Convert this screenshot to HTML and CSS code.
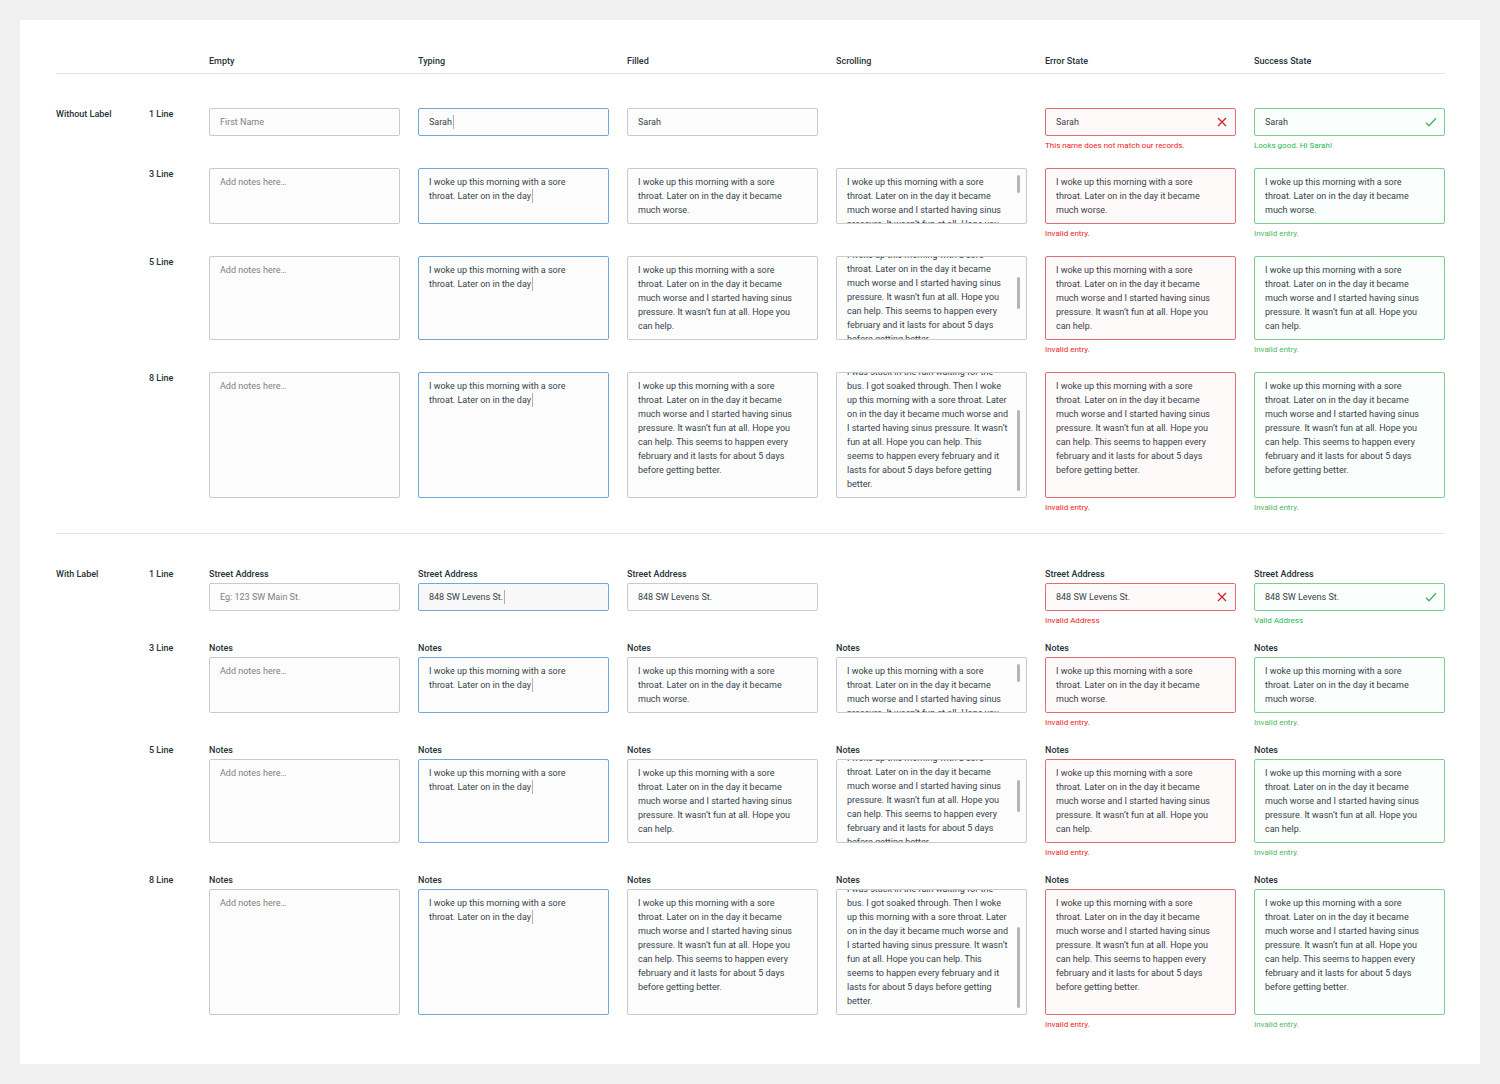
FILE: index.html
```html
<!DOCTYPE html>
<html lang="en">
<head>
<meta charset="utf-8">
<title>Text fields</title>
<link rel="stylesheet" href="styles.css">
</head>
<body>
<main class="sheet">
  <header class="row head">
    <span class="col-empty">Empty</span>
    <span>Typing</span>
    <span>Filled</span>
    <span>Scrolling</span>
    <span>Error State</span>
    <span>Success State</span>
  </header>

  <section class="group">
    <div class="row">
      <h2 class="title">Without Label</h2>
      <h3 class="title">1 Line</h3>
      <div class="field"><input class="box" type="text" placeholder="First Name" aria-label="First name"></div>
      <div class="field"><div class="wrap"><input class="box typing" type="text" value="Sarah" aria-label="First name"><i class="caret caret-name"></i></div></div>
      <div class="field"><input class="box" type="text" value="Sarah" aria-label="First name"></div>
      <div></div>
      <div class="field">
        <div class="wrap"><input class="box error" type="text" value="Sarah" aria-label="First name"><svg class="icon icon-error" viewBox="0 0 12 12"><path d="M2 2l8 8M10 2l-8 8"/></svg></div>
        <p class="help help-error">This name does not match our records.</p>
      </div>
      <div class="field">
        <div class="wrap"><input class="box success" type="text" value="Sarah" aria-label="First name"><svg class="icon icon-success" viewBox="0 0 12 12"><path d="M1 6.7l3 3L11 2.3"/></svg></div>
        <p class="help help-valid">Looks good. Hi Sarah!</p>
      </div>
    </div>

    <div class="row">
      <h3 class="title col-lines">3 Line</h3>
      <div class="field"><textarea class="box" rows="3" placeholder="Add notes here…" aria-label="Notes"></textarea></div>
      <div class="field"><div class="wrap"><textarea class="box typing" rows="3" aria-label="Notes">I woke up this morning with a sore
throat. Later on in the day</textarea><i class="caret caret-notes"></i></div></div>
      <div class="field"><textarea class="box" rows="3" aria-label="Notes">I woke up this morning with a sore
throat. Later on in the day it became
much worse.</textarea></div>
      <div class="field"><div class="wrap"><textarea class="box" rows="3" aria-label="Notes">I woke up this morning with a sore
throat. Later on in the day it became
much worse and I started having sinus
pressure. It wasn’t fun at all. Hope you
can help.</textarea><i class="thumb thumb-start"></i></div></div>
      <div class="field"><textarea class="box error" rows="3" aria-label="Notes">I woke up this morning with a sore
throat. Later on in the day it became
much worse.</textarea><p class="help help-error">Invalid entry.</p></div>
      <div class="field"><textarea class="box success" rows="3" aria-label="Notes">I woke up this morning with a sore
throat. Later on in the day it became
much worse.</textarea><p class="help help-success">Invalid entry.</p></div>
    </div>

    <div class="row">
      <h3 class="title col-lines">5 Line</h3>
      <div class="field"><textarea class="box" rows="5" placeholder="Add notes here…" aria-label="Notes"></textarea></div>
      <div class="field"><div class="wrap"><textarea class="box typing" rows="5" aria-label="Notes">I woke up this morning with a sore
throat. Later on in the day</textarea><i class="caret caret-notes"></i></div></div>
      <div class="field"><textarea class="box" rows="5" aria-label="Notes">I woke up this morning with a sore
throat. Later on in the day it became
much worse and I started having sinus
pressure. It wasn’t fun at all. Hope you
can help.</textarea></div>
      <div class="field"><div class="wrap"><textarea class="box" rows="5" data-scroll="15" aria-label="Notes">I woke up this morning with a sore
throat. Later on in the day it became
much worse and I started having sinus
pressure. It wasn’t fun at all. Hope you
can help. This seems to happen every
february and it lasts for about 5 days
before getting better.</textarea><i class="thumb thumb-middle"></i></div></div>
      <div class="field"><textarea class="box error" rows="5" aria-label="Notes">I woke up this morning with a sore
throat. Later on in the day it became
much worse and I started having sinus
pressure. It wasn’t fun at all. Hope you
can help.</textarea><p class="help help-error">Invalid entry.</p></div>
      <div class="field"><textarea class="box success" rows="5" aria-label="Notes">I woke up this morning with a sore
throat. Later on in the day it became
much worse and I started having sinus
pressure. It wasn’t fun at all. Hope you
can help.</textarea><p class="help help-success">Invalid entry.</p></div>
    </div>

    <div class="row">
      <h3 class="title col-lines">8 Line</h3>
      <div class="field"><textarea class="box" rows="8" placeholder="Add notes here…" aria-label="Notes"></textarea></div>
      <div class="field"><div class="wrap"><textarea class="box typing" rows="8" aria-label="Notes">I woke up this morning with a sore
throat. Later on in the day</textarea><i class="caret caret-notes"></i></div></div>
      <div class="field"><textarea class="box" rows="8" aria-label="Notes">I woke up this morning with a sore
throat. Later on in the day it became
much worse and I started having sinus
pressure. It wasn’t fun at all. Hope you
can help. This seems to happen every
february and it lasts for about 5 days
before getting better.</textarea></div>
      <div class="field"><div class="wrap"><textarea class="box" rows="8" data-scroll="14" aria-label="Notes">I was stuck in the rain waiting for the
bus. I got soaked through. Then I woke
up this morning with a sore throat. Later
on in the day it became much worse and
I started having sinus pressure. It wasn’t
fun at all. Hope you can help. This
seems to happen every february and it
lasts for about 5 days before getting
better.</textarea><i class="thumb thumb-end"></i></div></div>
      <div class="field"><textarea class="box error" rows="8" aria-label="Notes">I woke up this morning with a sore
throat. Later on in the day it became
much worse and I started having sinus
pressure. It wasn’t fun at all. Hope you
can help. This seems to happen every
february and it lasts for about 5 days
before getting better.</textarea><p class="help help-error">Invalid entry.</p></div>
      <div class="field"><textarea class="box success" rows="8" aria-label="Notes">I woke up this morning with a sore
throat. Later on in the day it became
much worse and I started having sinus
pressure. It wasn’t fun at all. Hope you
can help. This seems to happen every
february and it lasts for about 5 days
before getting better.</textarea><p class="help help-success">Invalid entry.</p></div>
    </div>
  </section>

  <section class="group labelled">
    <div class="row">
      <h2 class="title">With Label</h2>
      <h3 class="title">1 Line</h3>
      <div class="field"><label class="label" for="a1">Street Address</label><input id="a1" class="box" type="text" placeholder="Eg: 123 SW Main St."></div>
      <div class="field"><label class="label" for="a2">Street Address</label><div class="wrap"><input id="a2" class="box typing shaded" type="text" value="848 SW Levens St."><i class="caret caret-address"></i></div></div>
      <div class="field"><label class="label" for="a3">Street Address</label><input id="a3" class="box" type="text" value="848 SW Levens St."></div>
      <div></div>
      <div class="field">
        <label class="label" for="a5">Street Address</label>
        <div class="wrap"><input id="a5" class="box error" type="text" value="848 SW Levens St."><svg class="icon icon-error" viewBox="0 0 12 12"><path d="M2 2l8 8M10 2l-8 8"/></svg></div>
        <p class="help help-error">Invalid Address</p>
      </div>
      <div class="field">
        <label class="label" for="a6">Street Address</label>
        <div class="wrap"><input id="a6" class="box success" type="text" value="848 SW Levens St."><svg class="icon icon-success" viewBox="0 0 12 12"><path d="M1 6.7l3 3L11 2.3"/></svg></div>
        <p class="help help-valid">Valid Address</p>
      </div>
    </div>

    <div class="row">
      <h3 class="title col-lines">3 Line</h3>
      <div class="field"><label class="label" for="b1">Notes</label><textarea id="b1" class="box" rows="3" placeholder="Add notes here…"></textarea></div>
      <div class="field"><label class="label" for="b2">Notes</label><div class="wrap"><textarea id="b2" class="box typing" rows="3">I woke up this morning with a sore
throat. Later on in the day</textarea><i class="caret caret-notes"></i></div></div>
      <div class="field"><label class="label" for="b3">Notes</label><textarea id="b3" class="box" rows="3">I woke up this morning with a sore
throat. Later on in the day it became
much worse.</textarea></div>
      <div class="field"><label class="label" for="b4">Notes</label><div class="wrap"><textarea id="b4" class="box" rows="3">I woke up this morning with a sore
throat. Later on in the day it became
much worse and I started having sinus
pressure. It wasn’t fun at all. Hope you
can help.</textarea><i class="thumb thumb-start"></i></div></div>
      <div class="field"><label class="label" for="b5">Notes</label><textarea id="b5" class="box error" rows="3">I woke up this morning with a sore
throat. Later on in the day it became
much worse.</textarea><p class="help help-error">Invalid entry.</p></div>
      <div class="field"><label class="label" for="b6">Notes</label><textarea id="b6" class="box success" rows="3">I woke up this morning with a sore
throat. Later on in the day it became
much worse.</textarea><p class="help help-success">Invalid entry.</p></div>
    </div>

    <div class="row">
      <h3 class="title col-lines">5 Line</h3>
      <div class="field"><label class="label" for="c1">Notes</label><textarea id="c1" class="box" rows="5" placeholder="Add notes here…"></textarea></div>
      <div class="field"><label class="label" for="c2">Notes</label><div class="wrap"><textarea id="c2" class="box typing" rows="5">I woke up this morning with a sore
throat. Later on in the day</textarea><i class="caret caret-notes"></i></div></div>
      <div class="field"><label class="label" for="c3">Notes</label><textarea id="c3" class="box" rows="5">I woke up this morning with a sore
throat. Later on in the day it became
much worse and I started having sinus
pressure. It wasn’t fun at all. Hope you
can help.</textarea></div>
      <div class="field"><label class="label" for="c4">Notes</label><div class="wrap"><textarea id="c4" class="box" rows="5" data-scroll="15">I woke up this morning with a sore
throat. Later on in the day it became
much worse and I started having sinus
pressure. It wasn’t fun at all. Hope you
can help. This seems to happen every
february and it lasts for about 5 days
before getting better.</textarea><i class="thumb thumb-middle"></i></div></div>
      <div class="field"><label class="label" for="c5">Notes</label><textarea id="c5" class="box error" rows="5">I woke up this morning with a sore
throat. Later on in the day it became
much worse and I started having sinus
pressure. It wasn’t fun at all. Hope you
can help.</textarea><p class="help help-error">Invalid entry.</p></div>
      <div class="field"><label class="label" for="c6">Notes</label><textarea id="c6" class="box success" rows="5">I woke up this morning with a sore
throat. Later on in the day it became
much worse and I started having sinus
pressure. It wasn’t fun at all. Hope you
can help.</textarea><p class="help help-success">Invalid entry.</p></div>
    </div>

    <div class="row">
      <h3 class="title col-lines">8 Line</h3>
      <div class="field"><label class="label" for="d1">Notes</label><textarea id="d1" class="box" rows="8" placeholder="Add notes here…"></textarea></div>
      <div class="field"><label class="label" for="d2">Notes</label><div class="wrap"><textarea id="d2" class="box typing" rows="8">I woke up this morning with a sore
throat. Later on in the day</textarea><i class="caret caret-notes"></i></div></div>
      <div class="field"><label class="label" for="d3">Notes</label><textarea id="d3" class="box" rows="8">I woke up this morning with a sore
throat. Later on in the day it became
much worse and I started having sinus
pressure. It wasn’t fun at all. Hope you
can help. This seems to happen every
february and it lasts for about 5 days
before getting better.</textarea></div>
      <div class="field"><label class="label" for="d4">Notes</label><div class="wrap"><textarea id="d4" class="box" rows="8" data-scroll="14">I was stuck in the rain waiting for the
bus. I got soaked through. Then I woke
up this morning with a sore throat. Later
on in the day it became much worse and
I started having sinus pressure. It wasn’t
fun at all. Hope you can help. This
seems to happen every february and it
lasts for about 5 days before getting
better.</textarea><i class="thumb thumb-end"></i></div></div>
      <div class="field"><label class="label" for="d5">Notes</label><textarea id="d5" class="box error" rows="8">I woke up this morning with a sore
throat. Later on in the day it became
much worse and I started having sinus
pressure. It wasn’t fun at all. Hope you
can help. This seems to happen every
february and it lasts for about 5 days
before getting better.</textarea><p class="help help-error">Invalid entry.</p></div>
      <div class="field"><label class="label" for="d6">Notes</label><textarea id="d6" class="box success" rows="8">I woke up this morning with a sore
throat. Later on in the day it became
much worse and I started having sinus
pressure. It wasn’t fun at all. Hope you
can help. This seems to happen every
february and it lasts for about 5 days
before getting better.</textarea><p class="help help-success">Invalid entry.</p></div>
    </div>
  </section>
</main>
<script src="scroll.js"></script>
</body>
</html>
```
FILE: styles.css
```css
* {
  box-sizing: border-box;
}

body {
  margin: 0;
  padding: 20px;
  background: #f0f0f0;
  color: #263238;
  font-family: Roboto, "Liberation Sans", sans-serif;
  font-size: 9px;
  line-height: 12px;
}

.sheet {
  padding: 35px 35px 33px 36px;
  background: #fff;
}

.row {
  display: grid;
  grid-template-columns: 75px 42px repeat(6, minmax(0, 1fr));
  column-gap: 18px;
  align-items: start;
}

.head {
  padding-bottom: 6px;
  border-bottom: 1px solid #e4e4e4;
  font-weight: 500;
}

.col-empty {
  grid-column: 3;
}

.col-lines {
  grid-column: 2;
}

.title {
  margin: 0;
  font-size: 9px;
  font-weight: 500;
  line-height: 12px;
  white-space: nowrap;
}

.group {
  display: flex;
  flex-direction: column;
  gap: 16px;
  padding: 34px 0 19px;
}

.labelled {
  gap: 15px;
  padding-bottom: 0;
  border-top: 1px solid #e4e4e4;
}

.label {
  display: block;
  margin-bottom: 3px;
  font-weight: 500;
}

.wrap {
  position: relative;
}

.box {
  display: block;
  width: 100%;
  margin: 0;
  padding: 6px 10px;
  border: 1px solid #cacaca;
  border-radius: 2px;
  outline: 0;
  background: #fcfcfc;
  color: #37434a;
  font: inherit;
  line-height: 14px;
  resize: none;
  overflow: hidden;
}

.box::placeholder {
  color: #808080;
  opacity: 1;
}

.typing {
  border-color: #6fa8dc;
}

.shaded {
  background: #f8f8f8;
}

.error {
  border-color: #e06c75;
  background: #fffafa;
}

.success {
  border-color: #7fcb92;
  background: #fafefc;
}

.help {
  margin: 4px 0 0;
  font-size: 8px;
  line-height: 12px;
}

.help-error {
  color: #f01820;
}

.help-success {
  color: #4cb562;
}

.help-valid {
  color: #1db954;
}

.icon {
  position: absolute;
  top: 8px;
  right: 8px;
  width: 12px;
  height: 12px;
  fill: none;
  stroke-width: 1.3;
}

.icon-error {
  stroke: #d0202f;
}

.icon-success {
  stroke: #45b062;
}

.caret {
  position: absolute;
  top: 21px;
  width: 1px;
  height: 14px;
  background: #b0b0b0;
}

.caret-name {
  top: 7px;
  left: 35px;
}

.caret-address {
  top: 7px;
  left: 86px;
}

.caret-notes {
  left: 114px;
}

.thumb {
  position: absolute;
  right: 7px;
  width: 3px;
  border-radius: 2px;
  background: #b5b5b5;
}

.thumb-start {
  top: 7px;
  height: 18px;
}

.thumb-middle {
  top: 21px;
  height: 32px;
}

.thumb-end {
  top: 38px;
  height: 81px;
}
```
FILE: scroll.js
```js
document.querySelectorAll("textarea[data-scroll]").forEach(function (area) {
  area.scrollTop = Number(area.dataset.scroll);
});
```
